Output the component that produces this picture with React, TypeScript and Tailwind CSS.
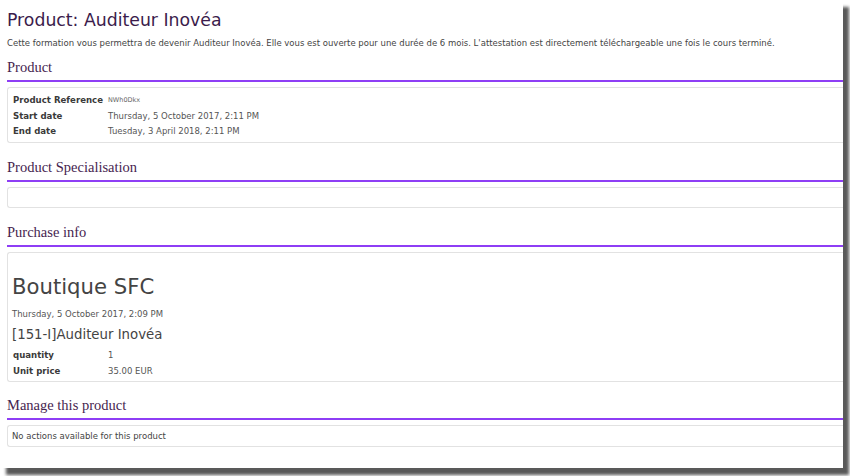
import React from "react";

const sans = { fontFamily: '"DejaVu Sans", Verdana, sans-serif' };

const SectionTitle: React.FC<{ title: string; className?: string }> = ({ title, className }) => (
  <div className={className}>
    <h2 className="font-['Liberation_Serif',serif] text-[14.5px] leading-[18px] text-[#46244f]">{title}</h2>
    <div className="mt-[4px] h-[2px] bg-[#8e3ef5]" />
  </div>
);

const Row: React.FC<{ label: string; value: string; small?: boolean }> = ({ label, value, small }) => (
  <div className="flex items-center h-[15.5px]">
    <div className="w-[95px] font-bold text-[#3a3a3a] text-[8.6px]">{label}</div>
    <div className={small ? "text-[6.5px] text-[#666]" : "text-[8.5px] text-[#555]"}>{value}</div>
  </div>
);

export default function App() {
  return (
    <div className="w-[850px] h-[476px] bg-white overflow-hidden">
      <div
        className="w-[843px] h-[468px] bg-white pl-[7px] pt-[9px] shadow-[6px_7px_3px_rgba(0,0,0,0.65)]"
        style={sans}
      >
        <h1 className="text-[17.3px] leading-[22px] text-[#3b1c4c]">Product: Auditeur Inovéa</h1>
        <p className="mt-[7px] text-[8.5px] leading-[10px] text-[#444]">
          Cette formation vous permettra de devenir Auditeur Inovéa. Elle vous est ouverte pour une durée de 6 mois.
          L'attestation est directement téléchargeable une fois le cours terminé.
        </p>

        <SectionTitle title="Product" className="mt-[10px]" />
        <div className="mt-[5px] border border-r-0 border-[#e2e2e2] rounded-l-[3px] pl-[5px] pt-[5px] pb-[3px] h-[56px]">
          <Row label="Product Reference" value="NWh0Dkx" small />
          <Row label="Start date" value="Thursday, 5 October 2017, 2:11 PM" />
          <Row label="End date" value="Tuesday, 3 April 2018, 2:11 PM" />
        </div>

        <SectionTitle title="Product Specialisation" className="mt-[15px]" />
        <div className="mt-[5px] border border-r-0 border-[#e2e2e2] rounded-l-[3px] h-[21px]" />

        <SectionTitle title="Purchase info" className="mt-[15px]" />
        <div className="mt-[5px] border border-r-0 border-[#e2e2e2] rounded-l-[3px] h-[130px] pl-[4px] pt-[20px]">
          <div className="text-[21.2px] leading-[28px] text-[#444]">Boutique SFC</div>
          <div className="mt-[8px] text-[8.5px] leading-[10px] text-[#555]">Thursday, 5 October 2017, 2:09 PM</div>
          <div className="mt-[7px] text-[13.3px] leading-[17px] text-[#444]">[151-I]Auditeur Inovéa</div>
          <div className="mt-[5px] pl-[1px]">
            <Row label="quantity" value="1" />
            <Row label="Unit price" value="35.00 EUR" />
          </div>
        </div>

        <SectionTitle title="Manage this product" className="mt-[14px]" />
        <div className="mt-[5px] border border-r-0 border-[#e2e2e2] rounded-l-[3px] h-[22px] pl-[4px] flex items-center text-[8.5px] text-[#444]">
          No actions available for this product
        </div>
      </div>
    </div>
  );
}
